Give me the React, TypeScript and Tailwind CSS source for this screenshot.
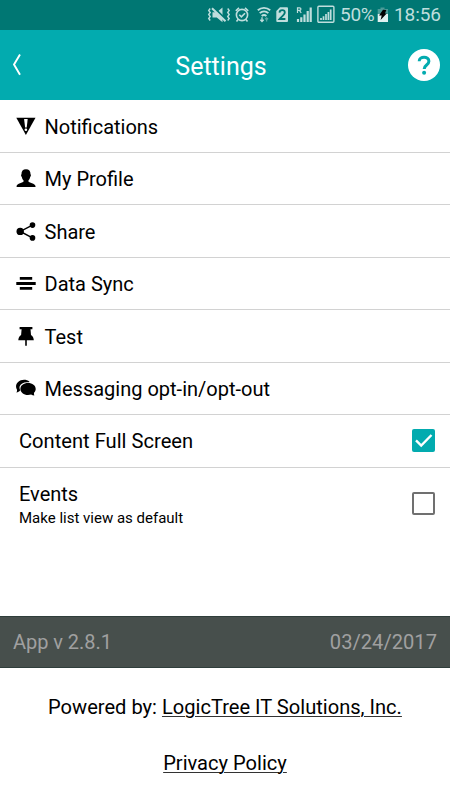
import React from 'react';

interface MenuItem {
  label: string;
  icon: React.ReactNode;
  height: string;
  labelPadding: string;
}

const menuItems: MenuItem[] = [
  {
    label: 'Notifications',
    height: 'h-[53px]',
    labelPadding: 'pt-[2px]',
    icon: (
      <>
        <path d="M.3.8h19.200L9.900 18z" />
        <path d="M8.100 2h3.600l-1 8.600H9.100z" fill="#fff" />
        <circle cx="9.900" cy="12.800" r="1.300" fill="#fff" />
      </>
    ),
  },
  {
    label: 'My Profile',
    height: 'h-[52px]',
    labelPadding: 'pt-0',
    icon: (
      <path d="M10 .3c3 0 4.700 1.900 4.500 5 .7.400.5 2-.3 2.600-.3 1.600-.9 2.500-1.700 3.300v1.200c0 1.200 7 1.600 7 4.900v.7H.6v-.7c0-3.300 6.900-3.700 6.900-4.900v-1.200c-.8-.8-1.400-1.700-1.700-3.300-.8-.6-1-2.200-.3-2.600C5.300 2.200 7 .3 10 .3z" />
    ),
  },
  {
    label: 'Share',
    height: 'h-[53px]',
    labelPadding: 'pt-[2px]',
    icon: (
      <>
        <path d="M16.400 3.100 4.300 9.400l12.100 6.500" fill="none" stroke="#000" strokeWidth="1.500" />
        <circle cx="4.200" cy="9.400" r="3.700" />
        <circle cx="16.500" cy="3.100" r="2.800" />
        <circle cx="16.500" cy="15.900" r="2.800" />
      </>
    ),
  },
  {
    label: 'Data Sync',
    height: 'h-[52px]',
    labelPadding: 'pt-0',
    icon: <path d="M3.800 3h12.400v2.800H3.800zM.3 7.900h19.400v3H.3zM3.800 13h12.400v2.800H3.800z" />,
  },
  {
    label: 'Test',
    height: 'h-[53px]',
    labelPadding: 'pt-[2px]',
    icon: (
      <path d="M3.600 0h12.800v2.300h-1.900l.5 5.700c1.900 1.200 2.700 3 2.800 5.200h-7v5.600H9.200v-5.600H2.300c.1-2.200.9-4 2.800-5.200l.5-5.700h-2z" />
    ),
  },
  {
    label: 'Messaging opt-in/opt-out',
    height: 'h-[52px]',
    labelPadding: 'pt-0',
    icon: (
      <>
        <path d="M.4 13.500c.7-1 .8-1.900.5-3C-.6 8-.1 5 2.100 3 5.100.3 10.300.1 13.500 2.700l-.3.600C8.200 2.600 4.500 4.400 3.700 7.200c-.4 1.500-.2 2.900.5 4.100-1 1.300-2.200 2.100-3.800 2.200z" />
        <path d="M12 4.100c4.400 0 7.700 2.600 7.700 5.900 0 1.500-.6 2.700-1.700 3.700-.1 1.200.1 1.900.4 2.800-1.300 0-2.300-.3-3.300-1-1 .3-2 .5-3.100.5-4.300 0-7.600-2.700-7.600-6S7.700 4.100 12 4.100z" />
      </>
    ),
  },
];

const StatusIcons: React.FC = () => (
  <svg className="h-[30px] w-[117px] shrink-0" viewBox="0 0 117 30" fill="none" stroke="#bfdedd" strokeWidth="1.600">
    {/* vibrate + mute */}
    <path d="M12.500 12.200h4.300l5.700-4.700v14.800l-5.700-4.700h-4.300z" fill="#bfdedd" stroke="none" />
    <path d="m13.500 7.300 13 13" stroke="#007773" strokeWidth="2.200" />
    <path d="m12 8.300 13.500 13" strokeWidth="2" />
    <path d="m10.200 8.500-1.500 2 1.500 2-1.500 2 1.500 2-1.500 2 1.500 2M27.700 8.500l1.500 2-1.500 2 1.500 2-1.500 2 1.500 2-1.500 2" strokeWidth="1.400" />
    {/* alarm */}
    <circle cx="42" cy="15" r="5.600" />
    <path d="m35.800 10.800 3.200-3M48.200 10.800 45 7.800M38.300 19.200l-1.800 2.200M45.700 19.200l1.800 2.200M39.300 14.800l2.100 2.100 3.600-3.700" />
    {/* wifi */}
    <path d="M57.800 10.300c3.600-3.300 8.800-3.300 12.400 0M59.700 13.100c2.500-2.200 6.200-2.200 8.700 0M61.700 16c1.400-1.200 3.300-1.200 4.700 0" strokeWidth="1.900" />
    <path d="M62 17.300v4.200m-1.700-1.700 1.700 1.700 1.700-1.700" strokeWidth="1.300" />
    <path d="M66.600 21.500v-3.700m-1.500 1.500 1.500-1.500 1.500 1.500" strokeWidth="1.300" opacity=".45" />
    {/* sim 2 */}
    <path d="M80 7.300h7q1 0 1 1V21q0 1-1 1h-9.700q-1 0-1-1V11z" fill="#bfdedd" stroke="none" />
    <path d="M79.500 12.600c.2-3.300 5.300-3.200 5.300-.1 0 2.300-3.500 4.300-5.300 6.500h5.900" stroke="#007773" strokeWidth="1.800" />
    {/* roaming signal */}
    <path d="M97.500 13V7.800h2.100c1.800 0 1.800 2.600 0 2.600h-2.100m2 0 1.700 2.600" strokeWidth="1.200" />
    <path d="M98 22v-3M101.300 22v-4.700M104.500 22v-7.500M107.700 22V11M110.700 22V7.500" strokeWidth="2.200" />
  </svg>
);

const BoxedSignal: React.FC = () => (
  <svg className="h-[30px] w-[20px] shrink-0" viewBox="0 0 20 30" fill="none" stroke="#bfdedd">
    <rect x=".9" y="6.200" width="16" height="16" rx="1" strokeWidth="1.400" />
    <path d="M4 20v-2M6.500 20v-3.700M9 20v-6M11.400 20v-8M13.700 20V9.500" strokeWidth="1.700" />
  </svg>
);

const App: React.FC = () => {
  return (
    <div className="flex h-[800px] w-[450px] flex-col overflow-hidden bg-white font-['Roboto',sans-serif] text-[20px] leading-6 text-black">
      <div className="flex h-[30px] shrink-0 items-center bg-[#007773] pl-[200px] text-[19px] text-[#bfdedd]">
        <StatusIcons />
        <BoxedSignal />
        <span className="ml-[3px] w-[37px] shrink-0 whitespace-nowrap tracking-[-0.3px]">50%</span>
        <svg className="h-[30px] w-[12px] shrink-0" viewBox="0 0 12 30">
          <path d="M3.500 7.500h4V9H11v5H.7V9h2.800z" fill="#4b9c99" />
          <path d="M.7 14H11v8H.7z" fill="#e0f1f0" />
          <path d="m6 9.800 3.300.2-1.300 3.500h1.700L3.600 20l1.100-4.600H2z" fill="#000" />
        </svg>
        <span className="ml-[5px] whitespace-nowrap tracking-[-0.1px]">18:56</span>
      </div>

      <header className="flex h-[70px] shrink-0 items-center justify-between bg-[#02abaf] pr-[10px] pl-[12px]">
        <svg className="h-[24px] w-[22px]" viewBox="0 0 22 24" fill="none" stroke="#fff" strokeWidth="1.900">
          <path d="M8 1.500 2 11.500l6 10.200" />
        </svg>
        <h1 className="pt-[3px] text-[25px] leading-8 text-white">Settings</h1>
        <svg className="h-[32px] w-[32px]" viewBox="0 0 32 32">
          <circle cx="16" cy="16" r="16" fill="#fff" />
          <path d="M11.200 12.200c0-5.400 9.700-5.400 9.700.1 0 3.800-4.700 3.700-4.700 7.600" fill="none" stroke="#02abaf" strokeWidth="3" />
          <circle cx="16.100" cy="23.700" r="2" fill="#02abaf" />
        </svg>
      </header>

      <ul className="shrink-0">
        {menuItems.map((item) => (
          <li key={item.label} className={`flex items-center border-b border-[#d2d2d2] pl-4 ${item.height}`}>
            <svg className="mr-[8.5px] h-[19px] w-[20px]" viewBox="0 0 20 19">
              {item.icon}
            </svg>
            <span className={item.labelPadding}>{item.label}</span>
          </li>
        ))}
        <li className="flex h-[53px] items-center justify-between border-b border-[#d2d2d2] pr-[15px] pl-[19px]">
          <span className="text-[20.15px]">Content Full Screen</span>
          <svg className="mb-px h-[23px] w-[23px]" viewBox="0 0 23 23">
            <rect width="23" height="23" rx="2" fill="#02abaf" />
            <path d="m4 11.300 5.200 5.200L19.500 6" fill="none" stroke="#fff" strokeWidth="2.400" />
          </svg>
        </li>
        <li className="flex h-[71px] items-center justify-between pr-[15px] pl-[19px]">
          <div className="pt-[5px]">
            <p>Events</p>
            <p className="text-[15px]">Make list view as default</p>
          </div>
          <span className="h-[23px] w-[23px] rounded-[2px] border-2 border-[#707070]" />
        </li>
      </ul>

      <div className="mt-auto flex h-[52px] shrink-0 items-center justify-between border-y border-[#2f3e3b] bg-[#474f4c] px-[13px] text-[#a0a0a0]">
        <span className="tracking-[-0.05px]">App v 2.8.1</span>
        <span className="text-[20.15px]">03/24/2017</span>
      </div>

      <footer className="flex h-[132.500px] shrink-0 flex-col items-center gap-8 pt-[27px] text-[20.100px]">
        <p>
          Powered by: <a className="underline decoration-[#333] decoration-1 underline-offset-2">LogicTree IT Solutions, Inc.</a>
        </p>
        <a className="underline decoration-[#333] decoration-1 underline-offset-2">Privacy Policy</a>
      </footer>
    </div>
  );
};

export default App;
